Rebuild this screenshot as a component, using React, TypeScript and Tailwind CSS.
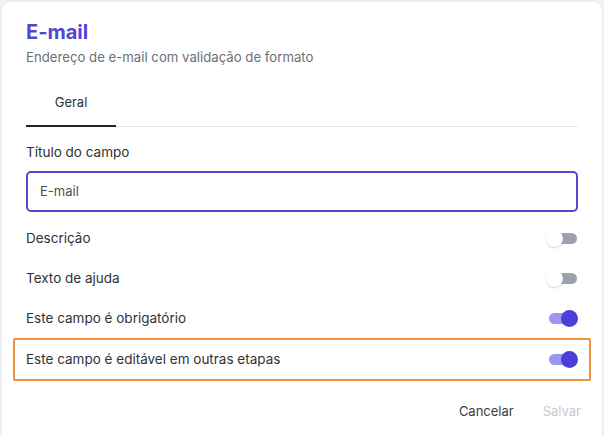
import React from "react";

function Toggle({ on }: { on: boolean }) {
  if (on) {
    return (
      <div className="relative w-[30px] h-[18px] flex items-center">
        <div className="absolute left-[1px] right-[3px] h-[11px] rounded-full bg-[#9c97ee]" />
        <div className="absolute right-0 w-[17px] h-[17px] rounded-full bg-[#4a3fd8]" />
      </div>
    );
  }
  return (
    <div className="relative w-[32px] h-[18px] flex items-center">
      <div className="absolute left-[4px] right-[1px] h-[11px] rounded-full bg-[#9ca3af]" />
      <div className="absolute left-0 w-[17px] h-[17px] rounded-full bg-white shadow-[0_1px_2px_rgba(0,0,0,0.18)]" />
    </div>
  );
}

function Row({ label, on, highlight }: { label: string; on: boolean; highlight?: boolean }) {
  if (highlight) {
    return (
      <div className="-mx-[13px] h-[43px] px-[11px] border-2 border-[#f0913a] rounded-[2px] flex items-center justify-between">
        <span className="text-[13.5px] text-[#2f3237]">{label}</span>
        <Toggle on={on} />
      </div>
    );
  }
  return (
    <div className="h-[40px] flex items-center justify-between">
      <span className="text-[13.5px] text-[#2f3237]">{label}</span>
      <Toggle on={on} />
    </div>
  );
}

export default function App() {
  return (
    <div
      className="h-[435px] w-[604px] bg-[#f1f1f3] pt-[2px] px-[2px] overflow-hidden"
      style={{ fontFamily: "Inter, 'Noto Sans', sans-serif" }}
    >
      <div className="bg-white rounded-t-[8px] h-[440px] px-[24px] pt-[16px] shadow-[0_0_2px_rgba(0,0,0,0.08)]">
        <div className="text-[20px] leading-[28px] font-bold text-[#5345d4]">E-mail</div>
        <div className="text-[13.2px] leading-[20px] text-[#6b7078] mt-[1px]">
          Endereço de e-mail com validação de formato
        </div>
        <div className="mt-[13px] border-b border-[#e5e7eb] flex">
          <div className="w-[90px] h-[47px] flex items-center justify-center text-[13px] text-[#2f3237] border-b-2 border-[#1f2230] -mb-[1px]">
            Geral
          </div>
        </div>
        <div className="mt-[15px] text-[13.5px] leading-[20px] text-[#2f3237]">Título do campo</div>
        <div className="mt-[9px] h-[41px] border-2 border-[#5549c9] rounded-[5px] flex items-center px-[12px] text-[13px] text-[#4b4f56]">
          E-mail
        </div>
        <div className="mt-[6px]">
          <Row label="Descrição" on={false} />
          <Row label="Texto de ajuda" on={false} />
          <Row label="Este campo é obrigatório" on={true} />
          <Row label="Este campo é editável em outras etapas" on={true} highlight />
        </div>
        <div className="mt-[11px] h-[40px] flex items-center justify-end gap-[29px] -mr-[3px]">
          <span className="text-[13px] text-[#3a3d42]">Cancelar</span>
          <span className="text-[13px] text-[#c8c9cc]">Salvar</span>
        </div>
      </div>
    </div>
  );
}
